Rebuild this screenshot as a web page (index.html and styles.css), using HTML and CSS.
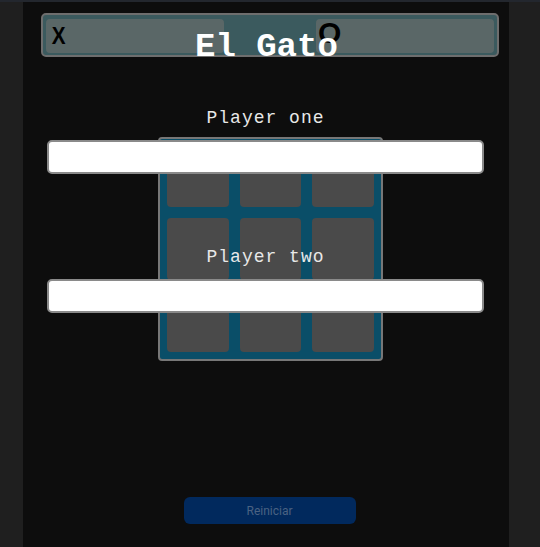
FILE: index.html
```html
<!DOCTYPE html>
<html lang="es">
<head>
<meta charset="utf-8">
<title>El Gato</title>
<link rel="stylesheet" href="styles.css">
</head>
<body>
<main class="app">
  <header class="scoreboard">
    <div class="player-cell"><span class="mark mark-x">X</span></div>
    <div class="middle"></div>
    <div class="player-cell"><span class="mark mark-o">O</span></div>
    <h1 class="title">El Gato</h1>
  </header>

  <section class="board">
    <div class="cell"></div><div class="cell"></div><div class="cell"></div>
    <div class="cell"></div><div class="cell"></div><div class="cell"></div>
    <div class="cell"></div><div class="cell"></div><div class="cell"></div>
  </section>

  <div class="actions">
    <button class="reset">Reiniciar</button>
  </div>

  <form class="players">
    <label class="field">
      <span class="field-label">Player one</span>
      <input class="field-input" type="text">
    </label>
    <label class="field">
      <span class="field-label">Player two</span>
      <input class="field-input" type="text">
    </label>
  </form>
</main>
</body>
</html>
```

FILE: styles.css
```css
* { box-sizing: border-box; }

html, body { margin: 0; padding: 0; }

body {
  background: #1f1f1f;
  border-top: 2px solid #23272e;
  height: 547px;
  overflow: hidden;
}

.app {
  position: relative;
  width: 486px;
  margin-left: 23px;
  min-height: 545px;
  background: #0d0d0d;
  padding: 11px 0 0 9px;
}

.scoreboard {
  position: relative;
  margin: 0 10px 0 9px;
  height: 44px;
  border: 2px solid #6e6e6e;
  border-radius: 5px;
  background: #3b5a5e;
  padding: 4px 3px 2px 3px;
  display: grid;
  grid-template-columns: 178px 1fr 178px;
}

.player-cell {
  background: #5a6767;
  border-radius: 4px;
  display: flex;
  align-items: center;
  padding-left: 5px;
}

.player-cell:last-of-type { padding-left: 2px; }

.mark {
  font-family: "Liberation Sans", Arial, sans-serif;
  font-weight: bold;
  color: #000;
  line-height: 1;
}

.mark-x { font-size: 23px; margin-top: 0; transform: scaleX(0.9); }
.mark-o { font-size: 30px; margin-top: -6px; }

.title {
  position: absolute;
  left: 152px;
  top: 15px;
  margin: 0;
  font-family: "Liberation Mono", "Courier New", monospace;
  font-weight: bold;
  font-size: 34px;
  line-height: 34px;
  color: #ffffff;
  white-space: nowrap;
}

.board {
  width: 225px;
  height: 224px;
  margin: 80px auto 0;
  border: 2px solid #777777;
  border-radius: 4px;
  background: #0a4e68;
  padding: 7px;
  display: grid;
  grid-template-columns: repeat(3, 1fr);
  grid-template-rows: repeat(3, 1fr);
  gap: 11px;
}

.cell {
  background: #4a4a4a;
  border-radius: 4px;
}

.actions {
  display: flex;
  justify-content: center;
  margin-top: 136px;
  padding-right: 2px;
}

.reset {
  width: 172px;
  height: 27px;
  border: none;
  border-radius: 6px;
  background: #01295d;
  color: #4a6282;
  font-family: Roboto, "Liberation Sans", Arial, sans-serif;
  font-size: 12px;
}

.players {
  position: absolute;
  left: 0;
  right: 0;
  top: 105px;
  padding: 0 25px 0 24px;
  display: flex;
  flex-direction: column;
  gap: 72px;
  margin: 0;
}

.field {
  display: flex;
  flex-direction: column;
  align-items: center;
  gap: 11px;
}

.field-label {
  font-family: "Liberation Mono", "Courier New", monospace;
  font-size: 18px;
  line-height: 22px;
  letter-spacing: 1px;
  color: #e8e8e8;
}

.field-input {
  width: 100%;
  height: 34px;
  border: 2px solid #8a8a8a;
  border-radius: 5px;
  background: #ffffff;
  margin: 0;
}
```
